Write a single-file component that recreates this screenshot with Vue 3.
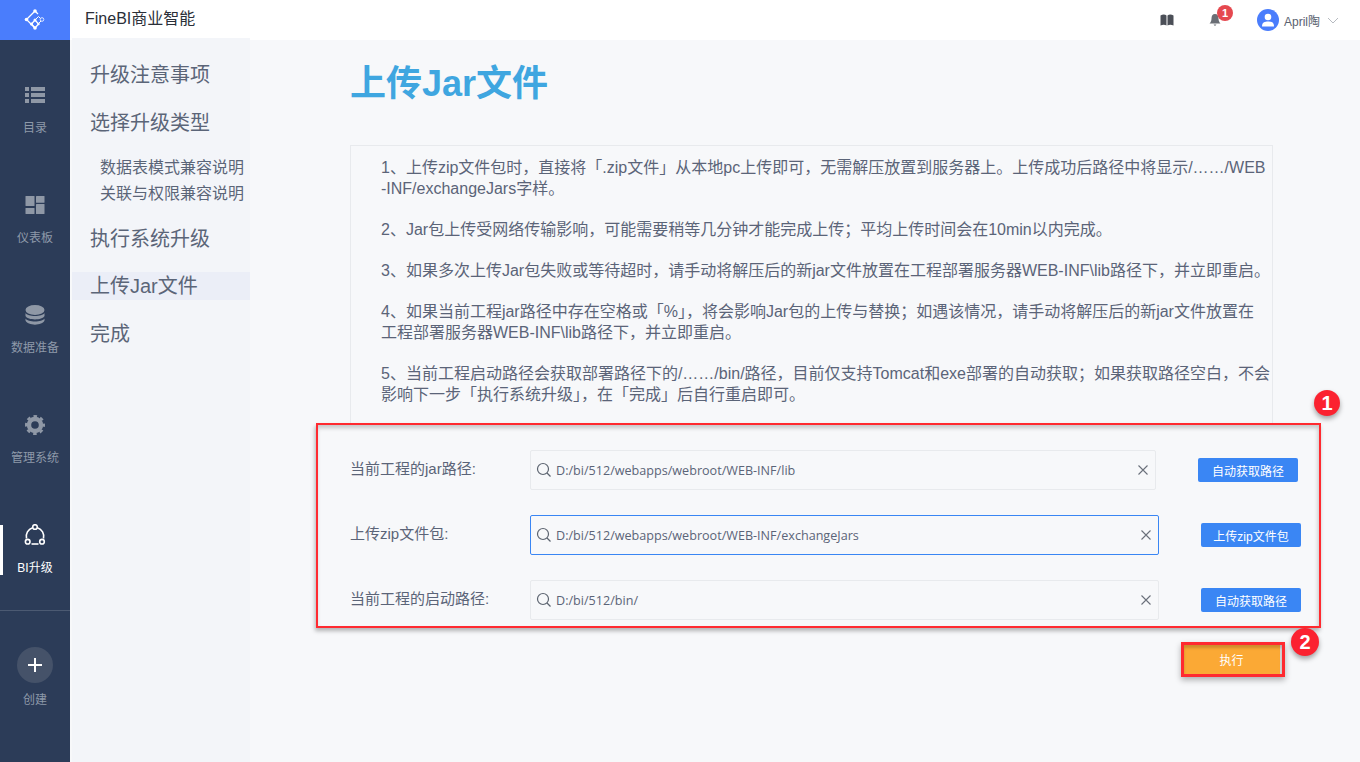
<script setup>
const sideItems = [
  { key: 'list', label: '目录' },
  { key: 'board', label: '仪表板' },
  { key: 'db', label: '数据准备' },
  { key: 'gear', label: '管理系统' },
  { key: 'up', label: 'BI升级', active: true }
]
const navItems = [
  { label: '升级注意事项', cls: 'n1' },
  { label: '选择升级类型', cls: 'n2' },
  { label: '数据表模式兼容说明', cls: 'sub s1' },
  { label: '关联与权限兼容说明', cls: 'sub s2' },
  { label: '执行系统升级', cls: 'n3' },
  { label: '上传Jar文件', cls: 'n4 cur' },
  { label: '完成', cls: 'n5' }
]
const rows = [
  { label: '当前工程的jar路径:', path: 'D:/bi/512/webapps/webroot/WEB-INF/lib', btn: '自动获取路径', cls: 'first' },
  { label: '上传zip文件包:', path: 'D:/bi/512/webapps/webroot/WEB-INF/exchangeJars', btn: '上传zip文件包', cls: 'focus' },
  { label: '当前工程的启动路径:', path: 'D:/bi/512/bin/', btn: '自动获取路径', cls: '' }
]
</script>

<template>
  <div class="app">
    <aside class="side">
      <div class="logo">
        <svg width="22" height="22" viewBox="0 0 22 22">
          <g fill="none" stroke="#fff" stroke-width="1.3">
            <path d="M11 2 L2.500 10.500 L11 19 M11 2 L14 5" />
            <path d="M11 19 L7.500 15 L11 11 L14.500 15 L11 19" />
            <path d="M11 11 L14.500 7.500 L18 11 L14.500 14.500" stroke-width="1" />
          </g>
          <g fill="#fff">
            <circle cx="11" cy="2" r="1.800" /><circle cx="2.500" cy="10.500" r="1.800" />
            <circle cx="11" cy="19" r="1.800" /><circle cx="7.500" cy="15" r="1.500" />
            <circle cx="11" cy="11" r="1.500" /><circle cx="14.500" cy="15" r="1.200" />
          </g>
          <circle cx="18" cy="10.500" r="1.800" fill="#4a7dfc" stroke="#dfe8ff" stroke-width="1" />
        </svg>
      </div>
      <div v-for="it in sideItems" :key="it.key" class="side-item" :class="{ active: it.active }">
        <svg class="ico" width="22" height="22" viewBox="0 0 22 22">
          <g v-if="it.key === 'list'" fill="currentColor">
            <rect x="1" y="3" width="4" height="4" /><rect x="7" y="3" width="14" height="4" />
            <rect x="1" y="9" width="4" height="4" /><rect x="7" y="9" width="14" height="4" />
            <rect x="1" y="15" width="4" height="4" /><rect x="7" y="15" width="14" height="4" />
          </g>
          <g v-else-if="it.key === 'board'" fill="currentColor">
            <rect x="1.500" y="2" width="9" height="10" rx="0.500" /><rect x="12" y="2" width="8.500" height="6.700" rx="0.500" />
            <rect x="1.500" y="14" width="9" height="6" rx="0.500" /><rect x="12" y="10" width="8.500" height="10" rx="0.500" />
          </g>
          <g v-else-if="it.key === 'db'" fill="currentColor">
            <ellipse cx="11" cy="6" rx="9.500" ry="5" />
            <path d="M1.500 9 C3.500 13 18.500 13 20.500 9 V12 C18.500 16.500 3.500 16.500 1.500 12 Z" />
            <path d="M1.500 14.500 C3.500 18.500 18.500 18.500 20.500 14.500 V16.500 C18.500 22 3.500 22 1.500 16.500 Z" />
          </g>
          <g v-else-if="it.key === 'gear'">
            <circle cx="11" cy="11" r="6" fill="none" stroke="currentColor" stroke-width="4.400" />
            <circle cx="11" cy="11" r="8.800" fill="none" stroke="currentColor" stroke-width="2.400" stroke-dasharray="3.600 3.310" stroke-dashoffset="1.800" />
          </g>
          <g v-else>
            <g fill="none" stroke="#fff" stroke-width="1.600">
              <path d="M8.600 3.800 A9 9 0 0 0 2.500 14.500" />
              <path d="M13.400 3.800 A9 9 0 0 1 19.500 14.500" />
              <path d="M7.500 20 H14.500" />
            </g>
            <g fill="#2c3c58" stroke="#fff" stroke-width="1.600">
              <circle cx="11" cy="3" r="2.300" />
              <circle cx="3.700" cy="17.700" r="2.300" />
              <circle cx="18" cy="17.700" r="2.300" />
            </g>
          </g>
        </svg>
        <span class="side-label">{{ it.label }}</span>
      </div>
      <div class="create">
        <div class="plus">
          <svg width="16" height="16" viewBox="0 0 16 16"><path d="M8 1 V15 M1 8 H15" stroke="#fff" stroke-width="2" /></svg>
        </div>
        <span class="side-label">创建</span>
      </div>
    </aside>

    <div class="right">
      <header class="top">
        <span class="brand">FineBI商业智能</span>
        <div class="tools">
          <svg class="book" width="14" height="12" viewBox="0 0 14 12">
            <path d="M0.500 1.500 C2.500 0.300 5 0.300 6.500 1.500 V11.500 C5 10.500 2.500 10.500 0.500 11.500 Z M7.500 1.500 C9 0.300 11.500 0.300 13.500 1.500 V11.500 C11.500 10.500 9 10.500 7.500 11.500 Z" fill="#4b4f57" />
          </svg>
          <div class="bell">
            <svg width="12" height="14" viewBox="0 0 12 14">
              <path d="M6 1 C3.500 1 2.500 3 2.500 5.500 C2.500 8 1.500 9.500 0.500 10.500 H11.500 C10.500 9.500 9.500 8 9.500 5.500 C9.500 3 8.500 1 6 1 Z M4.500 11.500 H7.500 L6 13 Z" fill="#6a6e75" />
            </svg>
            <span class="badge">1</span>
          </div>
          <div class="user">
            <span class="avatar">
              <svg width="14" height="14" viewBox="0 0 14 14">
                <circle cx="7" cy="4" r="3.300" fill="#fff" /><path d="M1 13.500 C1 9 4 8.500 7 8.500 C10 8.500 13 9 13 13.500 Z" fill="#fff" />
              </svg>
            </span>
            <span class="uname">April陶</span>
            <svg width="12" height="7" viewBox="0 0 12 7"><path d="M1 1 L6 6 L11 1" fill="none" stroke="#b6bac0" stroke-width="1" /></svg>
          </div>
        </div>
      </header>

      <div class="body">
        <nav class="nav">
          <div v-for="n in navItems" :key="n.label" class="nav-item" :class="n.cls">{{ n.label }}</div>
        </nav>
        <main class="main">
          <h1 class="title">上传Jar文件</h1>
          <section class="notice">
            <p>1、上传zip文件包时，直接将「.zip文件」从本地pc上传即可，无需解压放置到服务器上。上传成功后路径中将显示/……/WEB<br />-INF/exchangeJars字样。</p>
            <p>2、Jar包上传受网络传输影响，可能需要稍等几分钟才能完成上传；平均上传时间会在10min以内完成。</p>
            <p>3、如果多次上传Jar包失败或等待超时，请手动将解压后的新jar文件放置在工程部署服务器WEB-INF\lib路径下，并立即重启。</p>
            <p>4、如果当前工程jar路径中存在空格或「%」，将会影响Jar包的上传与替换；如遇该情况，请手动将解压后的新jar文件放置在<br />工程部署服务器WEB-INF\lib路径下，并立即重启。</p>
            <p>5、当前工程启动路径会获取部署路径下的/……/bin/路径，目前仅支持Tomcat和exe部署的自动获取；如果获取路径空白，不会<br />影响下一步「执行系统升级」，在「完成」后自行重启即可。</p>
          </section>
          <form class="form" @submit.prevent>
            <div v-for="r in rows" :key="r.label" class="row" :class="r.cls">
              <label class="lab">{{ r.label }}</label>
              <div class="input">
                <svg width="16" height="16" viewBox="0 0 16 16">
                  <circle cx="7" cy="7" r="5.500" fill="none" stroke="#5c6470" stroke-width="1.200" />
                  <path d="M11 11 L14.500 14.500" stroke="#5c6470" stroke-width="1.200" />
                </svg>
                <span class="path">{{ r.path }}</span>
                <svg class="x" width="10" height="10" viewBox="0 0 10 10">
                  <path d="M0.500 0.500 L9.500 9.500 M9.500 0.500 L0.500 9.500" stroke="#6a707a" stroke-width="1.100" />
                </svg>
              </div>
              <button type="button" class="btn">{{ r.btn }}</button>
            </div>
            <span class="mark m1">1</span>
          </form>
          <div class="exec-wrap">
            <button type="button" class="exec">执行</button>
            <span class="mark m2">2</span>
          </div>
        </main>
      </div>
    </div>
  </div>
</template>

<style>
html, body { margin: 0; padding: 0; }
</style>

<style scoped>
.app {
  display: flex;
  width: 1360px;
  height: 762px;
  overflow: hidden;
  background: #f7f8fa;
  font-family: "Liberation Sans", "Noto Sans CJK SC", sans-serif;
}
.side {
  flex: 0 0 70px;
  background: #2c3c58;
  display: flex;
  flex-direction: column;
  color: #8f98a6;
}
.logo {
  height: 40px;
  background: #4a7dfc;
  display: flex;
  align-items: center;
  justify-content: center;
}
.side-item {
  position: relative;
  height: 110px;
  box-sizing: border-box;
  padding-top: 44px;
  display: flex;
  flex-direction: column;
  align-items: center;
}
.ico { display: block; }
.side-label {
  margin-top: 14px;
  font-size: 12px;
  line-height: 16px;
  color: #8e99a9;
}
.side-item.active .side-label { color: #fff; }
.side-item.active::before {
  content: "";
  position: absolute;
  left: 0;
  top: 45px;
  width: 3px;
  height: 50px;
  background: #fff;
}
.create {
  margin-top: 20px;
  border-top: 1px solid #4c5a72;
  padding-top: 36px;
  display: flex;
  flex-direction: column;
  align-items: center;
}
.create .side-label { margin-top: 9px; }
.plus {
  width: 36px;
  height: 36px;
  border-radius: 50%;
  background: #455269;
  display: flex;
  align-items: center;
  justify-content: center;
}
.right { flex: 1; display: flex; flex-direction: column; min-width: 0; }
.top {
  height: 40px;
  flex: none;
  background: #fff;
  display: flex;
  align-items: center;
  justify-content: space-between;
  padding: 0 21px 0 15px;
  position: relative;
}
.brand { font-size: 16px; line-height: 20px; padding-bottom: 2px; color: #2a2f38; }
.tools { display: flex; align-items: center; }
.book { display: block; margin-right: 35px; }
.bell { position: relative; display: flex; margin-right: 36px; }
.badge {
  position: absolute;
  left: 8px;
  top: -8px;
  width: 16px;
  height: 16px;
  border-radius: 50%;
  background: #e5484f;
  color: #fff;
  font-size: 11px;
  font-weight: 700;
  line-height: 16px;
  text-align: center;
}
.user { display: flex; align-items: center; }
.avatar {
  width: 22px;
  height: 22px;
  border-radius: 50%;
  background: #4a7dfc;
  display: flex;
  align-items: center;
  justify-content: center;
}
.uname { font-size: 12px; color: #5a6270; margin: 0 7px 0 5px; }
.body { flex: 1; display: flex; min-height: 0; }
.nav {
  flex: 0 0 178px;
  margin-left: 2px;
  margin-top: -2px;
  background: #f3f5f9;
  position: relative;
  padding-top: 23px;
  color: #5b6578;
}
.nav-item {
  height: 28px;
  line-height: 28px;
  padding-left: 18px;
  font-size: 20px;
  white-space: nowrap;
}
.nav-item.n2 { margin-top: 20px; }
.nav-item.sub { font-size: 16px; padding-left: 28px; height: 26px; line-height: 26px; }
.nav-item.s1 { margin-top: 18px; }
.nav-item.n3 { margin-top: 18px; }
.nav-item.n4 { margin-top: 19px; }
.nav-item.n5 { margin-top: 20px; }
.nav-item.cur { background: #ebeef7; }
.main { flex: 1; min-width: 0; padding-left: 66px; position: relative; }
.title {
  margin: 23px 0 0 34px;
  font-size: 36px;
  line-height: 42px;
  font-weight: 700;
  color: #3fa6e0;
}
.notice {
  margin: 40px 0 0 34px;
  width: 923px;
  height: 278px;
  box-sizing: border-box;
  border: 1px solid #e8eaed;
  border-bottom: 0;
  padding: 11px 0 0 30px;
  color: #5b6478;
  font-size: 16px;
  line-height: 21px;
}
.notice p { margin: 0 0 20px; white-space: nowrap; }
.form {
  position: relative;
  width: 1005px;
  height: 205px;
  box-sizing: border-box;
  border: 2px solid #ff2a30;
  box-shadow: -1px 3px 4px rgba(0, 0, 0, .28), inset -1px 3px 4px rgba(0, 0, 0, .2);
  padding: 25px 0 0 32px;
  display: flex;
  flex-direction: column;
  gap: 25px;
}
.row { display: flex; align-items: center; height: 40px; }
.lab { flex: 0 0 180px; font-size: 15px; line-height: 20px; padding-bottom: 2px; color: #5b6478; white-space: nowrap; }
.input {
  width: 629px;
  height: 40px;
  box-sizing: border-box;
  border: 1px solid #e8eaed;
  border-radius: 2px;
  display: flex;
  align-items: center;
  padding: 0 7px 0 5px;
}
.row.first .input { width: 626px; }
.row.focus .input { border-color: #3a86f4; }
.path {
  flex: 1;
  margin-left: 4px;
  font-size: 12.6px;
  color: #5b6478;
  font-family: "Open Sans", "Noto Sans CJK SC", sans-serif;
  white-space: nowrap;
}
.btn {
  margin-left: 42px;
  width: 100px;
  height: 24px;
  padding: 0;
  border: 0;
  border-radius: 2px;
  background: #3a86f4;
  color: #fff;
  font-size: 12px;
  font-family: inherit;
}
.mark {
  position: absolute;
  display: flex;
  align-items: center;
  justify-content: center;
  width: 26px;
  height: 26px;
  border-radius: 50%;
  background: #fb2230;
  color: #fff;
  font-size: 20px;
  font-weight: 700;
  box-shadow: 0 3px 5px rgba(0, 0, 0, .35);
}
.m1 { left: 996px; top: -35px; }
.exec-wrap { position: relative; width: 1005px; height: 0; }
.exec {
  position: absolute;
  left: 865px;
  top: 14px;
  width: 104px;
  height: 35px;
  box-sizing: border-box;
  border: 3px solid #ff2a30;
  background: #fba935;
  color: #fff;
  font-size: 12px;
  font-family: inherit;
  padding: 0 3px 1px 0;
  box-shadow: 0 3px 6px rgba(0, 0, 0, .3), inset 0 3px 3px rgba(0, 0, 0, .18), inset -2px 0 0 #d9d9d9;
}
.m2 { left: 975px; top: 0; width: 28px; height: 28px; }
</style>
